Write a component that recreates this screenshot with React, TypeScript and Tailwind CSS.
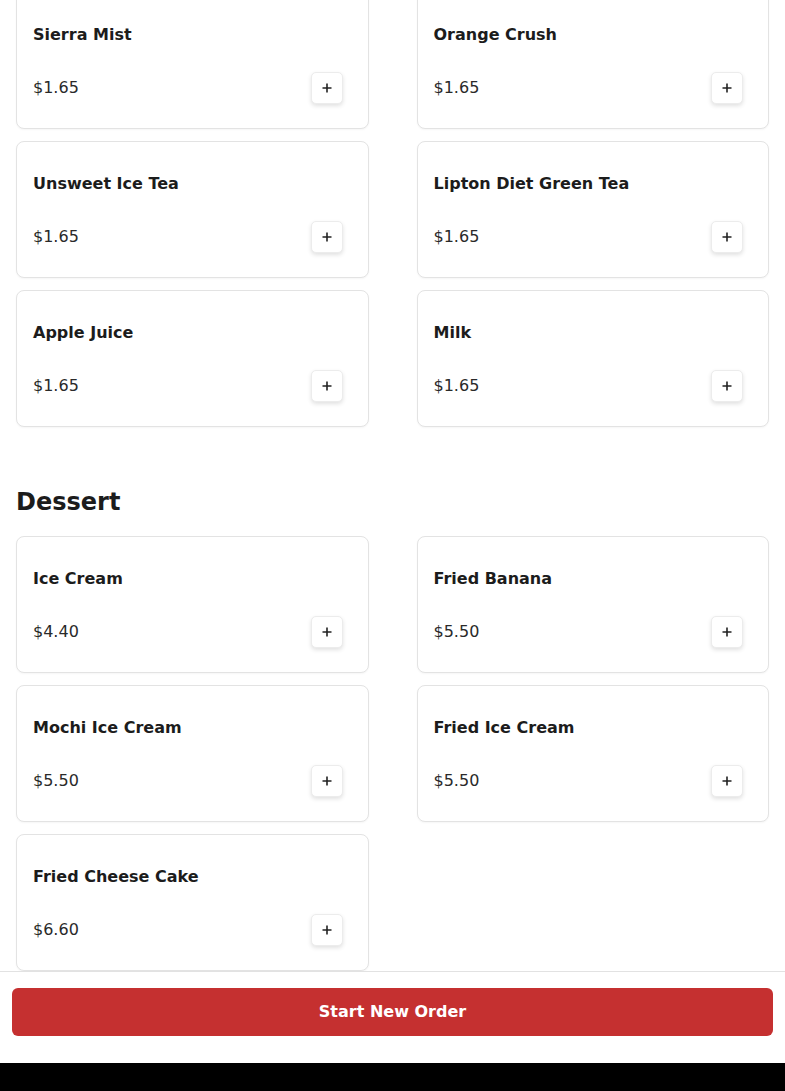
type Item = {name: string; price: string}

const drinks: Item[] = [
  {name: "Sierra Mist", price: "$1.65"},
  {name: "Orange Crush", price: "$1.65"},
  {name: "Unsweet Ice Tea", price: "$1.65"},
  {name: "Lipton Diet Green Tea", price: "$1.65"},
  {name: "Apple Juice", price: "$1.65"},
  {name: "Milk", price: "$1.65"},
]

const desserts: Item[] = [
  {name: "Ice Cream", price: "$4.40"},
  {name: "Fried Banana", price: "$5.50"},
  {name: "Mochi Ice Cream", price: "$5.50"},
  {name: "Fried Ice Cream", price: "$5.50"},
  {name: "Fried Cheese Cake", price: "$6.60"},
]

const PlusIcon = () => (
  <svg width="10" height="10" viewBox="0 0 10 10" fill="none">
    <path d="M5 0.5v9M0.5 5h9" stroke="#222" strokeWidth="1.6" />
  </svg>
)

const MenuCard = ({item}: {item: Item}) => (
  <div className="h-[137px] rounded-lg border border-[#e3e3e3] bg-white py-6 pl-4 pr-[25px] shadow-[0_1px_2px_rgba(0,0,0,0.04)]">
    <h3 className="text-base font-bold leading-[36px] text-[#1c1c1c]">{item.name}</h3>
    <div className="mt-[19px] flex h-8 items-center justify-between">
      <span className="text-base text-[#2a2a2a]">{item.price}</span>
      <button className="flex h-8 w-8 items-center justify-center rounded-[5px] border border-[#ececec] bg-white shadow-[0_2px_4px_rgba(0,0,0,0.12)]">
        <PlusIcon />
      </button>
    </div>
  </div>
)

export default function App() {
  return (
    <div
      className="flex h-[1091px] flex-col bg-white"
      style={{fontFamily: '"DejaVu Sans", sans-serif'}}
    >
      <main className="h-[971px] shrink-0 overflow-hidden px-4">
        <div className="-mt-2 grid grid-cols-2 gap-x-12 gap-y-3">
          {drinks.map(item => (
            <MenuCard key={item.name} item={item} />
          ))}
        </div>

        <h2 className="mt-[59px] mb-[18px] text-2xl font-bold leading-8 text-[#1c1c1c]">Dessert</h2>
        <div className="grid grid-cols-2 gap-x-12 gap-y-3">
          {desserts.map(item => (
            <MenuCard key={item.name} item={item} />
          ))}
        </div>
      </main>

      <footer className="h-[92px] shrink-0 border-t border-[#e2e2e2] bg-white px-3 pt-4">
        <button className="h-12 w-full rounded-md bg-[#c53030] text-base font-bold text-white">
          Start New Order
        </button>
      </footer>
      <div className="h-[28px] shrink-0 bg-black" />
    </div>
  )
}
